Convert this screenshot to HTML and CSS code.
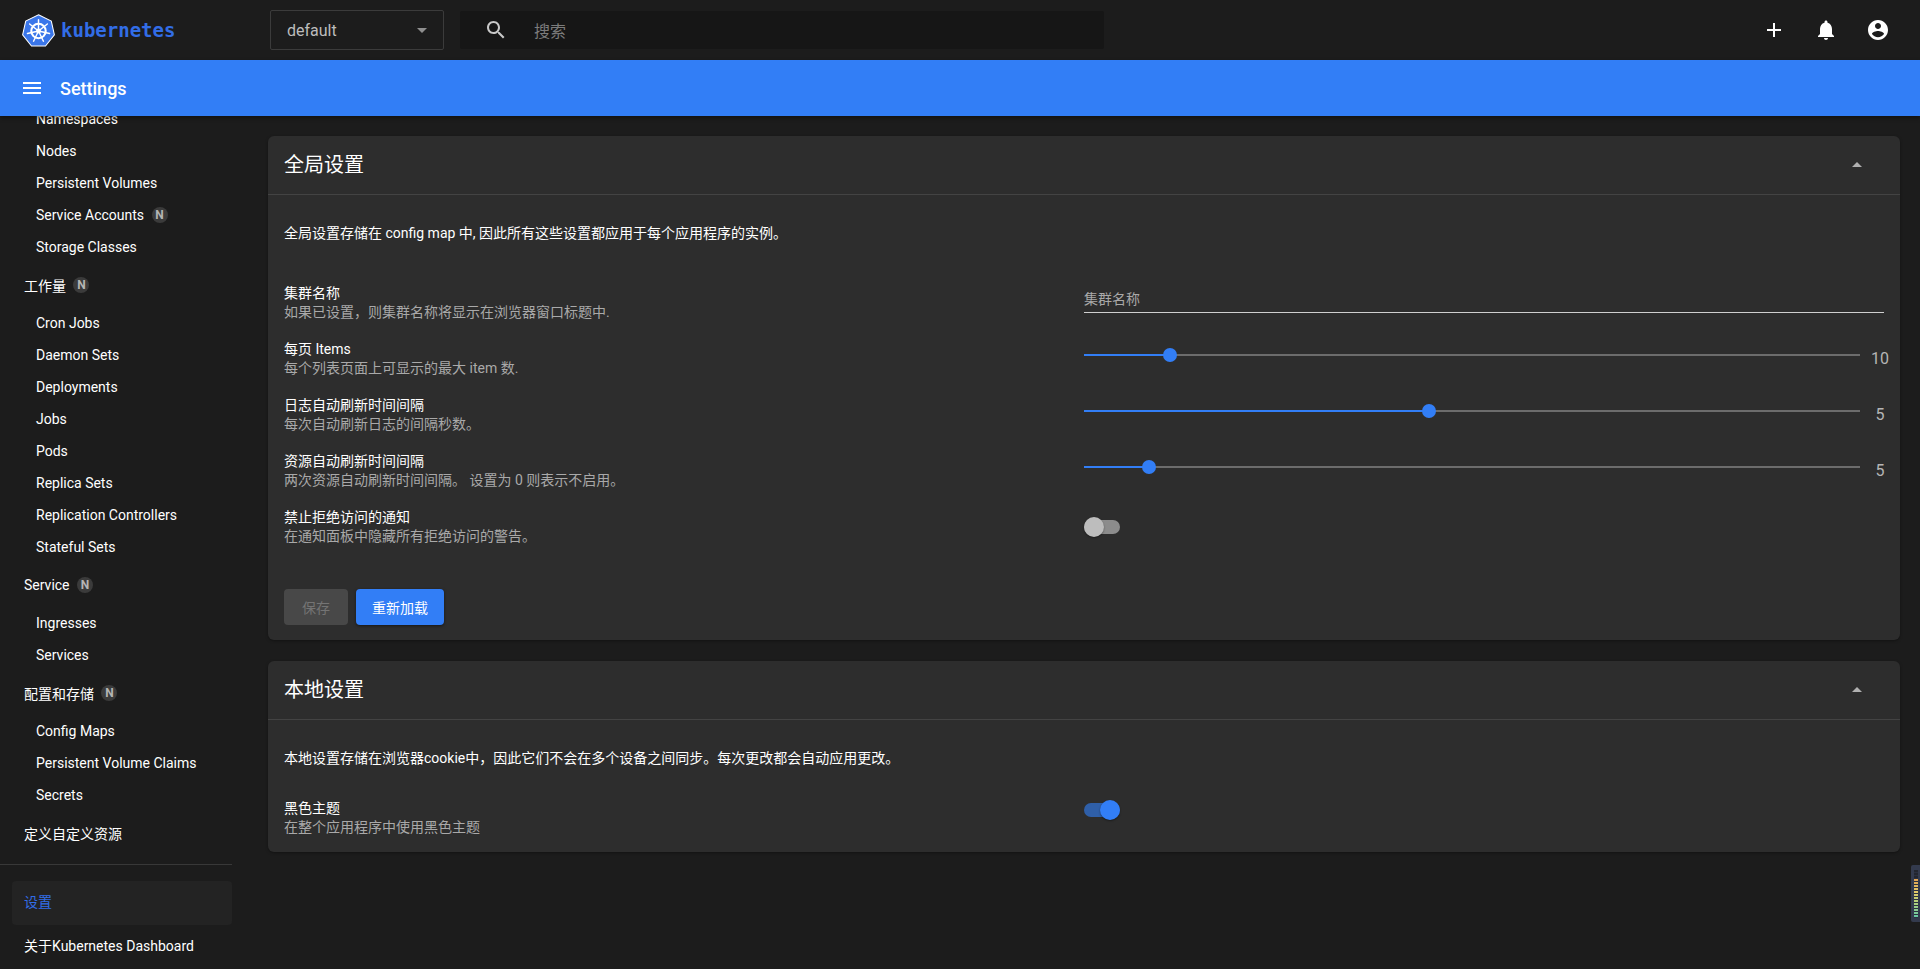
FILE: index.html
```html
<!DOCTYPE html>
<html>
<head>
  <title>Settings - Kubernetes Dashboard</title>
  <link rel="stylesheet" href="styles.css">
</head>
<body>
  <!-- Top toolbar -->
  <header class="topbar">
    <div class="brand">
      <svg class="brand-logo" viewBox="0 0 32 32">
        <path d="M16 .8 28.400 6.800 31.400 20.200 22.800 31 9.200 31 .6 20.200 3.600 6.800Z" fill="#3a76ea" stroke="#fff" stroke-width="1"/>
        <g fill="none" stroke="#fff" stroke-linecap="round">
          <circle cx="16" cy="16.500" r="7" stroke-width="2"/>
          <path d="M16 16.500V5.500M16 16.500 24.600 9.640M16 16.500 26.700 18.950M16 16.500 20.800 26.400M16 16.500 11.200 26.400M16 16.500 5.300 18.950M16 16.500 7.400 9.640" stroke-width="1.400"/>
        </g>
        <circle cx="16" cy="16.500" r="2.400" fill="#fff"/>
      </svg>
      <span class="brand-name">kubernetes</span>
    </div>
    <div class="ns-select">
      <span>default</span>
      <span class="caret-down"></span>
    </div>
    <div class="search">
      <svg class="icon search-icon" viewBox="0 0 24 24"><path d="M15.500 14h-.79l-.28-.27C15.410 12.590 16 11.110 16 9.500 16 5.910 13.090 3 9.500 3S3 5.910 3 9.500 5.910 16 9.500 16c1.610 0 3.090-.59 4.230-1.570l.27.28v.79l5 4.990L20.490 19l-4.990-5zm-6 0C7.010 14 5 11.990 5 9.500S7.010 5 9.500 5 14 7.010 14 9.500 11.990 14 9.500 14z"/></svg>
      <span class="search-text">搜索</span>
    </div>
    <div class="top-actions">
      <svg class="icon" viewBox="0 0 24 24"><path d="M19 13h-6v6h-2v-6H5v-2h6V5h2v6h6v2z"/></svg>
      <svg class="icon" viewBox="0 0 24 24"><path d="M12 22c1.100 0 2-.9 2-2h-4c0 1.100.89 2 2 2zm6-6v-5c0-3.070-1.640-5.640-4.500-6.320V4c0-.83-.67-1.500-1.500-1.500s-1.500.67-1.500 1.500v.68C7.630 5.360 6 7.920 6 11v5l-2 2v1h16v-1l-2-2z"/></svg>
      <svg class="icon" viewBox="0 0 24 24"><path d="M12 2C6.480 2 2 6.480 2 12s4.480 10 10 10 10-4.480 10-10S17.520 2 12 2zm0 3c1.660 0 3 1.340 3 3s-1.340 3-3 3-3-1.340-3-3 1.340-3 3-3zm0 14.200c-2.500 0-4.710-1.280-6-3.220.03-1.990 4-3.080 6-3.080 1.990 0 5.970 1.090 6 3.080-1.290 1.940-3.500 3.220-6 3.220z"/></svg>
    </div>
  </header>

  <!-- Page title bar -->
  <div class="titlebar">
    <svg class="icon menu-icon" viewBox="0 0 24 24"><path d="M3 18h18v-2H3v2zm0-5h18v-2H3v2zm0-7v2h18V6H3z"/></svg>
    <span class="page-title">Settings</span>
  </div>

  <div class="main">
    <nav class="sidebar">
      <div class="nav-scroll">
        <div class="nav-item">Namespaces</div>
        <div class="nav-item">Nodes</div>
        <div class="nav-item">Persistent Volumes</div>
        <div class="nav-item">Service Accounts <span class="badge">N</span></div>
        <div class="nav-item">Storage Classes</div>
        <div class="nav-section">工作量 <span class="badge">N</span></div>
        <div class="nav-item">Cron Jobs</div>
        <div class="nav-item">Daemon Sets</div>
        <div class="nav-item">Deployments</div>
        <div class="nav-item">Jobs</div>
        <div class="nav-item">Pods</div>
        <div class="nav-item">Replica Sets</div>
        <div class="nav-item">Replication Controllers</div>
        <div class="nav-item">Stateful Sets</div>
        <div class="nav-section">Service <span class="badge">N</span></div>
        <div class="nav-item">Ingresses</div>
        <div class="nav-item">Services</div>
        <div class="nav-section">配置和存储 <span class="badge">N</span></div>
        <div class="nav-item">Config Maps</div>
        <div class="nav-item">Persistent Volume Claims</div>
        <div class="nav-item">Secrets</div>
        <div class="nav-section">定义自定义资源</div>
      </div>
      <div class="nav-bottom">
        <div class="nav-section nav-active">设置</div>
        <div class="nav-section">关于Kubernetes Dashboard</div>
      </div>
    </nav>

    <main class="content">
      <!-- Global settings -->
      <section class="card">
        <div class="card-header">
          <h2>全局设置</h2>
          <span class="caret-up"></span>
        </div>
        <div class="card-body">
          <p class="card-intro">全局设置存储在 config map 中, 因此所有这些设置都应用于每个应用程序的实例。</p>
          <div class="setting-row">
            <div class="setting-info">
              <div class="setting-name">集群名称</div>
              <div class="setting-desc">如果已设置，则集群名称将显示在浏览器窗口标题中.</div>
            </div>
            <div class="text-input">集群名称</div>
          </div>
          <div class="setting-row">
            <div class="setting-info">
              <div class="setting-name">每页 Items</div>
              <div class="setting-desc">每个列表页面上可显示的最大 item 数.</div>
            </div>
            <div class="slider">
              <div class="slider-track"><div class="slider-fill" style="width: 11.100%"></div></div>
              <span class="slider-value">10</span>
            </div>
          </div>
          <div class="setting-row">
            <div class="setting-info">
              <div class="setting-name">日志自动刷新时间间隔</div>
              <div class="setting-desc">每次自动刷新日志的间隔秒数。</div>
            </div>
            <div class="slider">
              <div class="slider-track"><div class="slider-fill" style="width: 44.500%"></div></div>
              <span class="slider-value">5</span>
            </div>
          </div>
          <div class="setting-row">
            <div class="setting-info">
              <div class="setting-name">资源自动刷新时间间隔</div>
              <div class="setting-desc">两次资源自动刷新时间间隔。 设置为 0 则表示不启用。</div>
            </div>
            <div class="slider">
              <div class="slider-track"><div class="slider-fill" style="width: 8.400%"></div></div>
              <span class="slider-value">5</span>
            </div>
          </div>
          <div class="setting-row">
            <div class="setting-info">
              <div class="setting-name">禁止拒绝访问的通知</div>
              <div class="setting-desc">在通知面板中隐藏所有拒绝访问的警告。</div>
            </div>
            <div class="toggle"><span class="toggle-thumb"></span></div>
          </div>
          <div class="card-actions">
            <button class="btn btn-disabled">保存</button>
            <button class="btn btn-primary">重新加载</button>
          </div>
        </div>
      </section>

      <!-- Local settings -->
      <section class="card card-local">
        <div class="card-header">
          <h2>本地设置</h2>
          <span class="caret-up"></span>
        </div>
        <div class="card-body">
          <p class="card-intro">本地设置存储在浏览器cookie中，因此它们不会在多个设备之间同步。每次更改都会自动应用更改。</p>
          <div class="setting-row">
            <div class="setting-info">
              <div class="setting-name">黑色主题</div>
              <div class="setting-desc">在整个应用程序中使用黑色主题</div>
            </div>
            <div class="toggle toggle-on"><span class="toggle-thumb"></span></div>
          </div>
        </div>
      </section>
    </main>
  </div>

  <!-- Small level meter stuck on the window edge -->
  <div class="edge-meter"><div class="edge-meter-bars"></div></div>
</body>
</html>
```

FILE: styles.css
```css
* {
  box-sizing: border-box;
}

html,
body {
  height: 100%;
}

body {
  margin: 0;
  display: flex;
  flex-direction: column;
  overflow: hidden;
  background-color: #1c1c1c;
  color: #fff;
  font-family: Roboto, "Noto Sans CJK SC", sans-serif;
  font-size: 14px;
}

.icon {
  width: 24px;
  height: 24px;
  fill: #fff;
  flex-shrink: 0;
}

/* Top toolbar */
.topbar {
  height: 60px;
  flex-shrink: 0;
  display: flex;
  align-items: center;
  padding-left: 22px;
  background-color: #1c1c1c;
}

.brand {
  width: 248px;
  display: flex;
  align-items: center;
}

.brand-logo {
  width: 33px;
  height: 33px;
}

.brand-name {
  margin-left: 6px;
  color: #326de6;
  font-family: "DejaVu Sans Mono", monospace;
  font-size: 19px;
  font-weight: bold;
}

.ns-select {
  width: 174px;
  height: 40px;
  display: flex;
  align-items: center;
  justify-content: space-between;
  padding: 0 16px;
  border: 1px solid #3b3b3b;
  border-radius: 2px;
  color: #bdbdbd;
  font-size: 16px;
}

.caret-down {
  border-left: 5px solid transparent;
  border-right: 5px solid transparent;
  border-top: 5px solid #8f8f8f;
}

.search {
  width: 644px;
  height: 38px;
  margin-left: 16px;
  display: flex;
  align-items: center;
  padding-left: 24px;
  background-color: #161616;
  border-radius: 2px;
}

.search-icon {
  fill: #c8c8c8;
}

.search-text {
  margin-left: 26px;
  color: #7c7c7c;
  font-size: 16px;
}

.top-actions {
  margin-left: auto;
  display: flex;
  gap: 28px;
  padding-right: 30px;
}

/* Blue title bar */
.titlebar {
  height: 56px;
  flex-shrink: 0;
  display: flex;
  align-items: center;
  padding-left: 20px;
  background-color: #327ef6;
  box-shadow: 0 2px 4px rgba(0, 0, 0, 0.4);
  position: relative;
}

.menu-icon {
  width: 24px;
  height: 24px;
}

.page-title {
  margin-left: 16px;
  font-size: 18px;
  font-weight: 500;
}

/* Sidebar and content */
.main {
  flex: 1;
  min-height: 0;
  display: flex;
}

.sidebar {
  width: 232px;
  flex-shrink: 0;
  display: flex;
  flex-direction: column;
}

.nav-scroll {
  flex: 1;
  min-height: 0;
  overflow: hidden;
}

.nav-scroll .nav-item:first-child {
  margin-top: -13px;
}

.nav-item {
  height: 32px;
  display: flex;
  align-items: center;
  padding-left: 36px;
  white-space: pre;
}

.nav-section {
  height: 44px;
  display: flex;
  align-items: center;
  padding-left: 24px;
  white-space: pre;
}

.badge {
  width: 16px;
  height: 16px;
  margin-left: 4px;
  display: inline-flex;
  align-items: center;
  justify-content: center;
  border-radius: 50%;
  background-color: #3b3b3b;
  color: #b5b5b5;
  font-size: 12px;
  font-weight: 700;
}

.nav-bottom {
  padding-top: 16px;
  border-top: 1px solid #383838;
}

.nav-bottom .nav-section {
  padding-left: 12px;
  padding-bottom: 5px;
  margin-left: 12px;
}

.nav-active {
  background-color: #232323;
  color: #326de6;
  border-radius: 4px;
}

.content {
  flex: 1;
  min-width: 0;
  padding: 20px 20px 0 36px;
}

.card {
  margin-bottom: 21px;
  background-color: #2d2d2d;
  border-radius: 6px;
  box-shadow: 0 1px 3px rgba(0, 0, 0, 0.35);
}

.card-header {
  height: 59px;
  display: flex;
  align-items: center;
  justify-content: space-between;
  padding: 0 38px 0 16px;
  border-bottom: 1px solid #434343;
}

.card-header h2 {
  margin: 0 0 3px;
  font-size: 20px;
  font-weight: 400;
}

.caret-up {
  margin-bottom: 2px;
  border-left: 5px solid transparent;
  border-right: 5px solid transparent;
  border-bottom: 5px solid #b0b0b0;
}

.card-body {
  padding: 28px 16px 15px;
}

.card-intro {
  margin: 0 0 32px;
  line-height: 20px;
}

.card-local .card-body {
  padding-bottom: 6px;
}

.card-local .card-intro {
  margin-bottom: 22px;
}

.setting-row {
  height: 56px;
  display: grid;
  grid-template-columns: 800px 1fr;
  align-items: center;
}

.setting-name {
  line-height: 19px;
}

.setting-desc {
  line-height: 19px;
  color: #a9a9a9;
}

.text-input {
  height: 32px;
  margin-bottom: 12px;
  padding-top: 7px;
  border-bottom: 1px solid #cfcfcf;
  color: #a9a9a9;
}

.slider {
  display: flex;
  align-items: center;
}

.slider-track {
  flex: 1;
  height: 2px;
  margin-bottom: 9px;
  background-color: #6c6c6c;
  position: relative;
}

.slider-fill {
  height: 2px;
  background-color: #327ef6;
  position: relative;
}

.slider-fill::after {
  content: "";
  position: absolute;
  right: -7px;
  top: -6px;
  width: 14px;
  height: 14px;
  border-radius: 50%;
  background-color: #327ef6;
}

.slider-value {
  width: 24px;
  margin: 0 -8px 2px 8px;
  text-align: center;
  color: #b5b5b5;
  font-size: 16px;
}

.toggle {
  width: 36px;
  height: 14px;
  border-radius: 7px;
  background-color: #8c8c8c;
  position: relative;
}

.toggle-thumb {
  position: absolute;
  left: 0;
  top: -3px;
  width: 20px;
  height: 20px;
  border-radius: 50%;
  background-color: #bdbdbd;
  box-shadow: 0 1px 2px rgba(0, 0, 0, 0.4);
}

.toggle-on {
  margin-bottom: 16px;
  background-color: #2f5fa8;
}

.toggle-on .toggle-thumb {
  left: 16px;
  background-color: #327ef6;
}

.card-actions {
  display: flex;
  gap: 8px;
  margin-top: 34px;
}

.btn {
  height: 36px;
  min-width: 64px;
  padding: 0 16px;
  border: none;
  border-radius: 4px;
  font-family: inherit;
  font-size: 14px;
}

.btn-disabled {
  background-color: #484848;
  color: #747474;
}

.btn-primary {
  background-color: #327ef6;
  color: #fff;
  box-shadow: 0 1px 3px rgba(0, 0, 0, 0.5);
}

/* Overlay on the right window edge */
.edge-meter {
  position: absolute;
  right: 0;
  top: 865px;
  width: 9px;
  height: 57px;
  padding: 5px 0 4px 3px;
  background-color: #333a4d;
  border-radius: 2px 0 0 2px;
}

.edge-meter-bars {
  width: 4px;
  height: 100%;
  background:
    repeating-linear-gradient(to bottom, transparent 0 2px, #2b3040 2px 3px),
    linear-gradient(to bottom, #23262f 0 18%, #e0a050 18%, #e3c868 45%, #b8d078 65%, #60c8a8 100%);
}
```
